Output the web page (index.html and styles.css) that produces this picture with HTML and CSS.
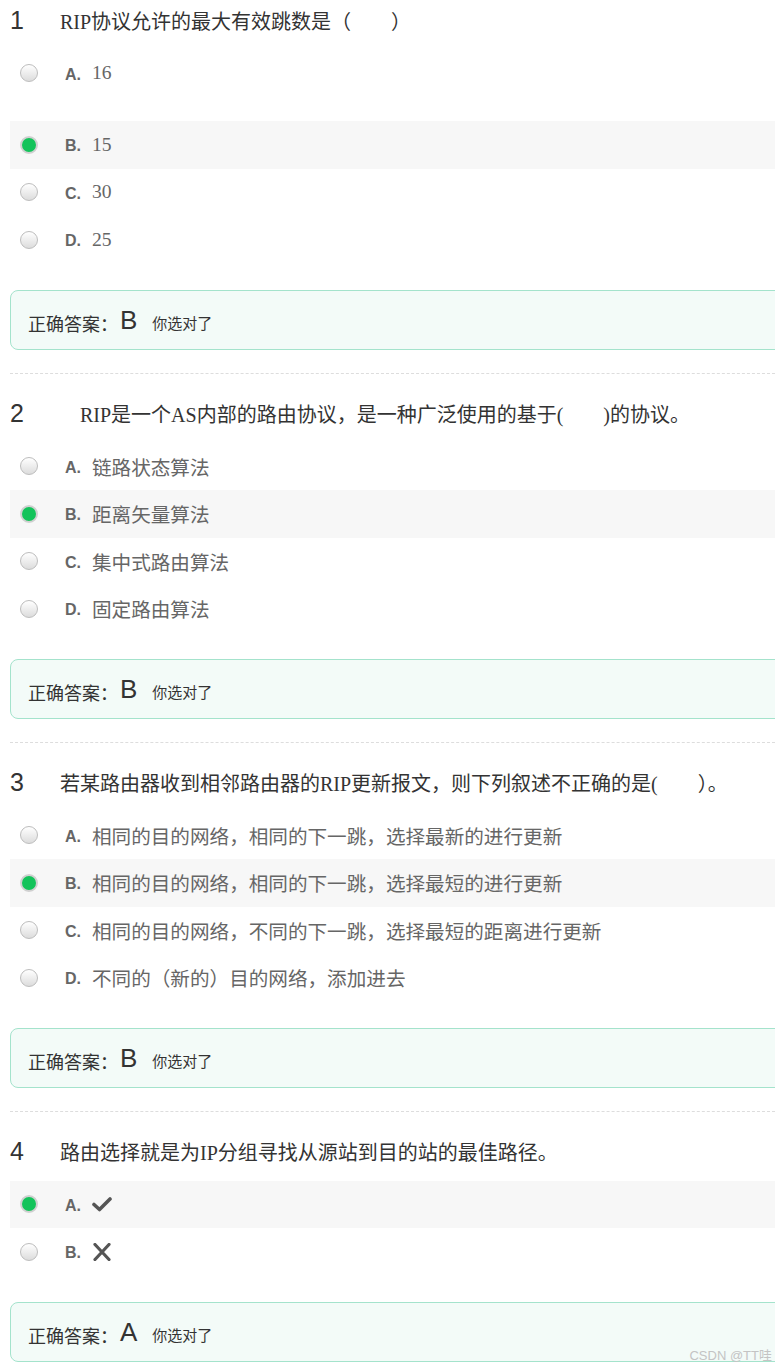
FILE: index.html
```html
<!DOCTYPE html>
<html lang="zh-CN">
<head>
    <meta charset="UTF-8">
    <meta name="viewport" content="width=device-width, initial-scale=1.0">
    <title>作业详情</title>
    <link rel="stylesheet" href="styles.css">
</head>
<body>

<div class="page">

    <!-- 第1题 -->
    <div class="question first">
        <div class="q-title">
            <span class="q-num">1</span>
            <span class="q-text">RIP协议允许的最大有效跳数是（　　）</span>
        </div>
        <ul class="options">
            <li class="option option-gap"><span class="radio"></span><span class="opt-label">A.</span><span class="opt-text">16</span></li>
            <li class="option checked"><span class="radio"></span><span class="opt-label">B.</span><span class="opt-text">15</span></li>
            <li class="option"><span class="radio"></span><span class="opt-label">C.</span><span class="opt-text">30</span></li>
            <li class="option"><span class="radio"></span><span class="opt-label">D.</span><span class="opt-text">25</span></li>
        </ul>
        <div class="answer">
            <span class="answer-label">正确答案：</span><span class="answer-key">B</span><span class="answer-tip">你选对了</span>
        </div>
    </div>

    <!-- 第2题 -->
    <div class="question">
        <div class="q-title">
            <span class="q-num">2</span>
            <span class="q-text">　RIP是一个AS内部的路由协议，是一种广泛使用的基于(　　)的协议。</span>
        </div>
        <ul class="options">
            <li class="option"><span class="radio"></span><span class="opt-label">A.</span><span class="opt-text">链路状态算法</span></li>
            <li class="option checked"><span class="radio"></span><span class="opt-label">B.</span><span class="opt-text">距离矢量算法</span></li>
            <li class="option"><span class="radio"></span><span class="opt-label">C.</span><span class="opt-text">集中式路由算法</span></li>
            <li class="option"><span class="radio"></span><span class="opt-label">D.</span><span class="opt-text">固定路由算法</span></li>
        </ul>
        <div class="answer">
            <span class="answer-label">正确答案：</span><span class="answer-key">B</span><span class="answer-tip">你选对了</span>
        </div>
    </div>

    <!-- 第3题 -->
    <div class="question">
        <div class="q-title">
            <span class="q-num">3</span>
            <span class="q-text">若某路由器收到相邻路由器的RIP更新报文，则下列叙述不正确的是(　　）。</span>
        </div>
        <ul class="options">
            <li class="option"><span class="radio"></span><span class="opt-label">A.</span><span class="opt-text">相同的目的网络，相同的下一跳，选择最新的进行更新</span></li>
            <li class="option checked"><span class="radio"></span><span class="opt-label">B.</span><span class="opt-text">相同的目的网络，相同的下一跳，选择最短的进行更新</span></li>
            <li class="option"><span class="radio"></span><span class="opt-label">C.</span><span class="opt-text">相同的目的网络，不同的下一跳，选择最短的距离进行更新</span></li>
            <li class="option"><span class="radio"></span><span class="opt-label">D.</span><span class="opt-text">不同的（新的）目的网络，添加进去</span></li>
        </ul>
        <div class="answer">
            <span class="answer-label">正确答案：</span><span class="answer-key">B</span><span class="answer-tip">你选对了</span>
        </div>
    </div>

    <!-- 第4题 判断题 -->
    <div class="question">
        <div class="q-title">
            <span class="q-num">4</span>
            <span class="q-text">路由选择就是为IP分组寻找从源站到目的站的最佳路径。</span>
        </div>
        <ul class="options">
            <li class="option checked"><span class="radio"></span><span class="opt-label">A.</span>
                <svg class="judge-icon" width="20" height="16" viewBox="0 0 20 16"><path d="M2 8.5 L7.5 13.5 L18 3" fill="none" stroke="#555" stroke-width="3.6" stroke-linecap="round" stroke-linejoin="round"/></svg>
            </li>
            <li class="option"><span class="radio"></span><span class="opt-label">B.</span>
                <svg class="judge-icon" width="20" height="18" viewBox="0 0 20 18"><path d="M3 1.5 L17 16.5 M17 1.5 L3 16.5" fill="none" stroke="#555" stroke-width="3.2" stroke-linecap="round"/></svg>
            </li>
        </ul>
        <div class="answer">
            <span class="answer-label">正确答案：</span><span class="answer-key">A</span><span class="answer-tip">你选对了</span>
        </div>
    </div>

</div>

<div class="watermark">CSDN @TT哇</div>

</body>
</html>
```

FILE: styles.css
```css
body {
    margin: 0;
    padding: 0;
    background-color: #fff;
    font-family: "Liberation Sans", "Noto Sans CJK SC", sans-serif;
    color: #333;
    overflow-x: hidden;
}
.page {
    padding: 5px 0 0 10px;
}
.question {
    border-top: 1px dashed #ddd;
    padding-top: 24px;
    margin-top: 23px;
}
.question.first {
    border-top: none;
    padding-top: 0;
    margin-top: 0;
}
.q-title {
    display: flex;
    align-items: center;
    height: 30px;
}
.q-num {
    width: 50px;
    flex-shrink: 0;
    font-size: 25px;
    color: #333;
}
.q-text {
    font-family: "Liberation Serif", "Noto Sans CJK SC", serif;
    font-size: 20px;
    color: #333;
    white-space: nowrap;
}
.options {
    list-style: none;
    margin: 14.5px 0 0 0;
    padding: 0;
}
.option {
    display: flex;
    align-items: center;
    height: 47.5px;
    padding-left: 10px;
}
.option-gap {
    margin-bottom: 24px;
}
.option.checked {
    background-color: #f7f7f7;
}
.radio {
    width: 16px;
    height: 16px;
    border-radius: 50%;
    border: 1px solid #bdbdbd;
    background: linear-gradient(#ffffff, #dcdcdc);
    flex-shrink: 0;
    margin-right: 27px;
    box-sizing: content-box;
}
.option.checked .radio {
    width: 14px;
    height: 14px;
    border: 2px solid #d0d0d0;
    background: #13c35a;
}
.opt-label {
    width: 27px;
    flex-shrink: 0;
    font-family: "Liberation Sans", sans-serif;
    font-weight: bold;
    font-size: 16px;
    color: #666;
    padding-top: 3px;
}
.opt-text {
    font-family: "Liberation Serif", "Noto Sans CJK SC", serif;
    font-size: 19.6px;
    color: #666;
}
.judge-icon {
    display: block;
}
.answer {
    margin: 26.5px -20px 0 0;
    height: 60px;
    box-sizing: border-box;
    border: 1px solid #a4e3cc;
    border-radius: 8px;
    background-color: #f3fbf8;
    padding: 5px 0 0 17px;
    display: flex;
    align-items: center;
}
.answer-label {
    font-family: "Noto Sans CJK SC", sans-serif;
    font-size: 18px;
    color: #333;
}
.answer-key {
    font-family: "Liberation Sans", sans-serif;
    font-size: 26px;
    color: #333;
    margin-left: 2px;
    margin-top: -5px;
}
.answer-tip {
    font-family: "Noto Sans CJK SC", sans-serif;
    font-size: 15px;
    color: #333;
    margin-left: 15px;
}
.watermark {
    position: absolute;
    right: 3px;
    top: 1345px;
    font-family: "Liberation Sans", "Noto Sans CJK SC", sans-serif;
    font-size: 13px;
    color: #c4c4c4;
}
```
